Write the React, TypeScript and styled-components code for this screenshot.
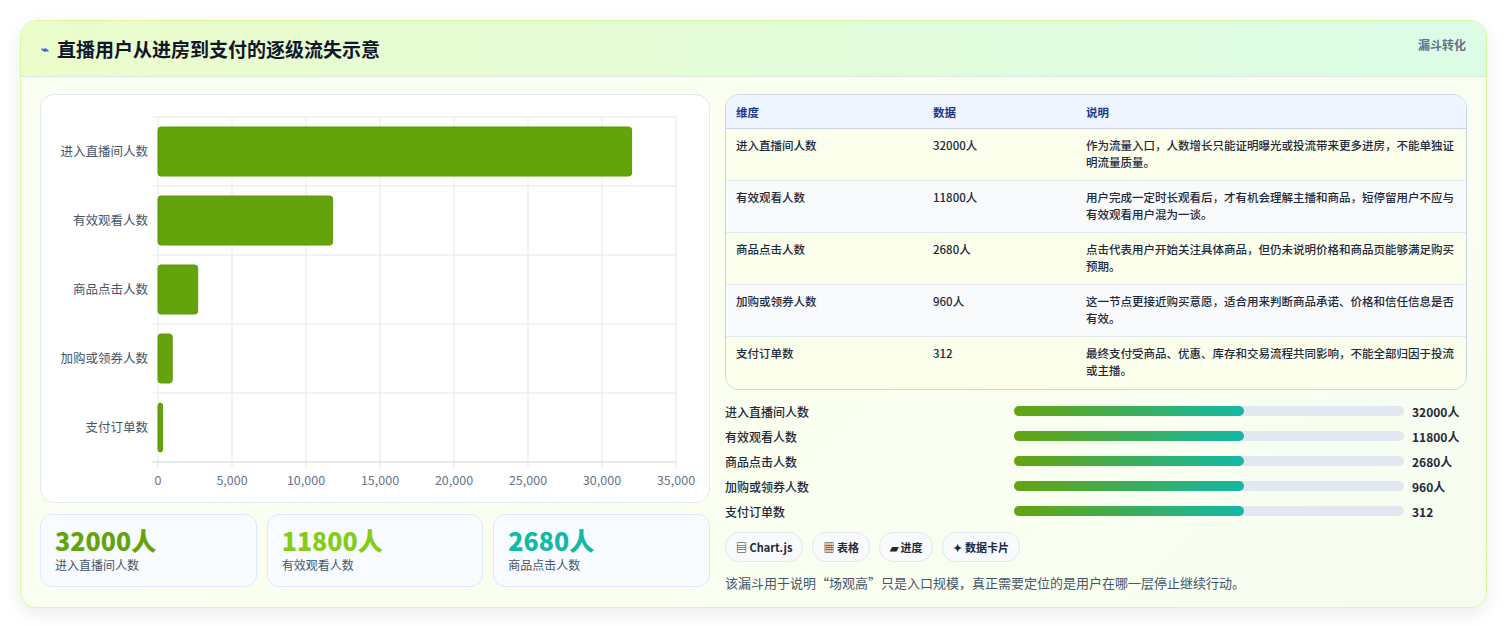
import styled, { createGlobalStyle } from 'styled-components'

const rows = [
    { name: '进入直播间人数', value: 32000, unit: '人', note: '作为流量入口，人数增长只能证明曝光或投流带来更多进房，不能单独证明流量质量。' },
    { name: '有效观看人数', value: 11800, unit: '人', note: '用户完成一定时长观看后，才有机会理解主播和商品，短停留用户不应与有效观看用户混为一谈。' },
    { name: '商品点击人数', value: 2680, unit: '人', note: '点击代表用户开始关注具体商品，但仍未说明价格和商品页能够满足购买预期。' },
    { name: '加购或领券人数', value: 960, unit: '人', note: '这一节点更接近购买意愿，适合用来判断商品承诺、价格和信任信息是否有效。' },
    { name: '支付订单数', value: 312, unit: '', note: '最终支付受商品、优惠、库存和交易流程共同影响，不能全部归因于投流或主播。' },
]

const Global = createGlobalStyle`
    body {
        margin: 0;
        background: #fff;
        font-family: "Noto Sans CJK SC", "Noto Sans", sans-serif;
        color: #1e293b;
    }
`

export default function App() {
    return (
        <Page>
            <Global />
            <Card>
                <Header>
                    <Title><TitleIcon>⌁</TitleIcon>直播用户从进房到支付的逐级流失示意</Title>
                    <Tag>漏斗转化</Tag>
                </Header>
                <Body>
                    <Left>
                        <ChartBox>
                            <FunnelChart />
                        </ChartBox>
                        <Stats>
                            <Stat><StatValue $c="#65a30d">32000人</StatValue><StatLabel>进入直播间人数</StatLabel></Stat>
                            <Stat><StatValue $c="#84cc16">11800人</StatValue><StatLabel>有效观看人数</StatLabel></Stat>
                            <Stat><StatValue $c="#14b8a6">2680人</StatValue><StatLabel>商品点击人数</StatLabel></Stat>
                        </Stats>
                    </Left>
                    <Right>
                        <Table>
                            <thead>
                                <tr><Th>维度</Th><Th>数据</Th><Th>说明</Th></tr>
                            </thead>
                            <tbody>
                                {rows.map((r, i) => (
                                    <Tr key={r.name} $odd={i % 2 === 0}>
                                        <Td>{r.name}</Td>
                                        <Td>{r.value}{r.unit}</Td>
                                        <Td>{r.note}</Td>
                                    </Tr>
                                ))}
                            </tbody>
                        </Table>
                        <Progress>
                            {rows.map(r => (
                                <ProgressRow key={r.name}>
                                    <span>{r.name}</span>
                                    <Track><Fill /></Track>
                                    <b>{r.value}{r.unit}</b>
                                </ProgressRow>
                            ))}
                        </Progress>
                        <Chips>
                            <Chip>▤ Chart.js</Chip>
                            <Chip>▦ 表格</Chip>
                            <Chip>▰ 进度</Chip>
                            <Chip>✦ 数据卡片</Chip>
                        </Chips>
                        <Footnote>该漏斗用于说明“场观高”只是入口规模，真正需要定位的是用户在哪一层停止继续行动。</Footnote>
                    </Right>
                </Body>
            </Card>
        </Page>
    )
}

function FunnelChart() {
    const x0 = 117, w = 518, y0 = 22, band = 69
    const ticks = [0, 5000, 10000, 15000, 20000, 25000, 30000, 35000]
    return (
        <svg width="670" height="409" style={{ display: 'block' }}>
            {ticks.map(t => {
                const x = x0 + (t / 35000) * w
                return (
                    <g key={t}>
                        <line x1={x} y1={y0} x2={x} y2={y0 + band * 5 + 6} stroke="#e5e7eb" />
                        <text x={x} y={390} textAnchor="middle" fontSize="12.5" fill="#64748b">{t.toLocaleString('en-US')}</text>
                    </g>
                )
            })}
            {[0, 1, 2, 3, 4, 5].map(i => (
                <line key={i} x1={x0 - 6} x2={x0 + w} y1={y0 + band * i} y2={y0 + band * i} stroke={i === 5 ? '#cbd5e1' : '#e5e7eb'} />
            ))}
            {rows.map((r, i) => {
                const y = y0 + band * i + 10
                return (
                    <g key={r.name}>
                        <rect x={x0} y={y} width={Math.max(4, (r.value / 35000) * w)} height={49} rx="3" fill="#65a30d" stroke="#5b9a0b" />
                        <text x={x0 - 10} y={y + 29} textAnchor="end" fontSize="12.5" fill="#475569">{r.name}</text>
                    </g>
                )
            })}
        </svg>
    )
}

const Page = styled.div`
    padding: 20px;
    height: 626px;
    box-sizing: border-box;
`
const Card = styled.div`
    border: 1px solid #d9f99d;
    border-radius: 16px;
    background: linear-gradient(135deg, #fbfff2, #fafff0 60%, #f6fdf0);
    box-shadow: 0 6px 18px rgba(0, 0, 0, 0.08);
    overflow: hidden;
    height: 586px;
`
const Header = styled.div`
    height: 55px;
    display: flex;
    align-items: flex-start;
    justify-content: space-between;
    padding: 0 20px;
    background: linear-gradient(90deg, #ecfccb, #dcfce7);
    border-bottom: 1px solid #dbe7e0;
`
const Title = styled.h1`
    margin: 14px 0 0;
    font-size: 19px;
    font-weight: 700;
    color: #0f172a;
    display: flex;
    align-items: center;
    gap: 8px;
`
const TitleIcon = styled.span`
    font-size: 13px;
    color: #2563eb;
`
const Tag = styled.span`
    margin-top: 15px;
    font-size: 12px;
    font-weight: 700;
    color: #64748b;
`
const Body = styled.div`
    display: grid;
    grid-template-columns: 670px 742px;
    gap: 15px;
    padding: 17px 19px 0;
`
const Left = styled.div`
    display: flex;
    flex-direction: column;
    gap: 11px;
`
const ChartBox = styled.div`
    background: #fff;
    border: 1px solid #e2e8f0;
    border-radius: 14px;
    height: 409px;
    box-sizing: border-box;
    overflow: hidden;
`
const Stats = styled.div`
    display: grid;
    grid-template-columns: repeat(3, 1fr);
    gap: 10px;
`
const Stat = styled.div`
    height: 73px;
    box-sizing: border-box;
    border: 1px solid #dbeafe;
    border-radius: 12px;
    background: #f8fbff;
    padding: 10px 14px;
`
const StatValue = styled.div<{ $c: string }>`
    font-size: 25px;
    font-weight: 800;
    line-height: 30px;
    color: ${({ $c }) => $c};
`
const StatLabel = styled.div`
    font-size: 12px;
    color: #475569;
    margin-top: 1px;
`
const Right = styled.div`
    display: flex;
    flex-direction: column;
`
const Table = styled.table`
    border-collapse: separate;
    border-spacing: 0;
    border: 1px solid #cbd5e1;
    border-radius: 14px;
    overflow: hidden;
    font-size: 11.5px;
    width: 100%;
    table-layout: fixed;
    & th:nth-child(1) { width: 177px; }
    & th:nth-child(2) { width: 133px; }
`
const Th = styled.th`
    text-align: left;
    height: 33px;
    padding: 0 10px;
    background: #eff6ff;
    color: #1e3a8a;
    font-weight: 700;
    border-bottom: 1px solid #cbd5e1;
`
const Tr = styled.tr<{ $odd: boolean }>`
    background: ${({ $odd }) => ($odd ? '#fbfeeb' : '#f8fafc')};
    & td { border-bottom: 1px solid #e2e8f0; }
    &:last-child td { border-bottom: none; }
`
const Td = styled.td`
    height: 52px;
    padding: 8px 10px 0;
    vertical-align: top;
    line-height: 17px;
    color: #1e293b;
    font-weight: 500;
    box-sizing: border-box;
`
const Progress = styled.div`
    display: flex;
    flex-direction: column;
    gap: 7px;
    margin-top: 12px;
`
const ProgressRow = styled.div`
    display: grid;
    grid-template-columns: 281px 390px 1fr;
    align-items: center;
    gap: 8px;
    font-size: 12px;
    height: 18px;
    font-weight: 500;
    & b { font-weight: 700; }
`
const Track = styled.div`
    height: 10px;
    border-radius: 5px;
    background: #e2e8f0;
`
const Fill = styled.div`
    width: 59%;
    height: 100%;
    border-radius: 5px;
    background: linear-gradient(90deg, #65a30d, #14b8a6);
`
const Chips = styled.div`
    display: flex;
    gap: 9px;
    margin-top: 12px;
`
const Chip = styled.span`
    height: 28px;
    padding: 0 10px;
    display: inline-flex;
    align-items: center;
    border: 1px solid #e2e8f0;
    border-radius: 14px;
    background: #f8fafc;
    font-size: 11px;
    font-weight: 700;
    color: #1e293b;
`
const Footnote = styled.p`
    margin: 11px 0 0;
    font-size: 13px;
    color: #475569;
`
